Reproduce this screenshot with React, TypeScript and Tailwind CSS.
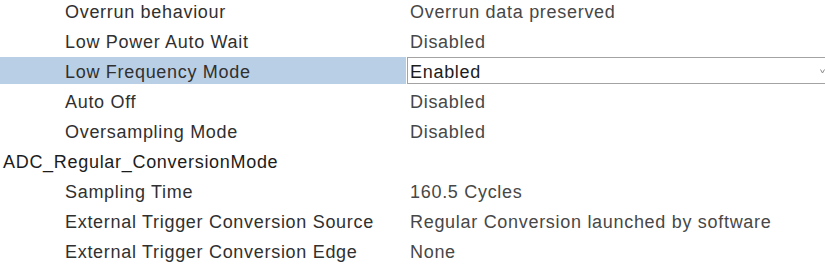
import React from "react";

type Row = { label: string; value?: string; category?: boolean; selected?: boolean };

const rows: Row[] = [
  { label: "Overrun behaviour", value: "Overrun data preserved" },
  { label: "Low Power Auto Wait", value: "Disabled" },
  { label: "Low Frequency Mode", value: "Enabled", selected: true },
  { label: "Auto Off", value: "Disabled" },
  { label: "Oversampling Mode", value: "Disabled" },
  { label: "ADC_Regular_ConversionMode", category: true },
  { label: "Sampling Time", value: "160.5 Cycles" },
  { label: "External Trigger Conversion Source", value: "Regular Conversion launched by software" },
  { label: "External Trigger Conversion Edge", value: "None" },
];

export default function App() {
  return (
    <div className="w-[825px] h-[274px] overflow-hidden bg-white font-['Liberation_Sans',Arial,sans-serif] text-[18px] leading-[20px] tracking-[0.7px] text-[#303030]">
      {/* property grid, first row scrolled slightly out of view */}
      <div className="-mt-[4px] flex flex-col">
        {rows.map((r) =>
          r.category ? (
            <div key={r.label} className="h-[30px] flex items-start">
              <div className="mt-[1px] h-[27px] pt-[5px] pl-[3px] text-[#1c1c1c] whitespace-nowrap">{r.label}</div>
            </div>
          ) : (
            <div key={r.label} className="h-[30px] flex items-start">
              <div
                className={`w-[406px] shrink-0 mt-[1px] h-[27px] pt-[5px] pl-[65px] whitespace-nowrap ${r.selected ? "bg-[#b9cfe6]" : ""}`}
              >
                {r.label}
              </div>
              {r.selected ? (
                <div className="ml-[1px] w-[440px] shrink-0 mt-[1px] h-[27px] border border-[#a3a3a3] flex items-start pt-[4px] pl-[2px] text-[#1c1c1c]">
                  <span className="w-[410px]">{r.value}</span>
                  <svg width="5" height="5" viewBox="0 0 5 5" className="mt-[7px]">
                    <path d="M0.5 0.5 L2.5 4 L4.5 0.5" stroke="#8a8a8a" strokeWidth="1" fill="none" />
                  </svg>
                </div>
              ) : (
                <div className="mt-[1px] h-[27px] pt-[5px] pl-[4px] text-[#474747] whitespace-nowrap">{r.value}</div>
              )}
            </div>
          )
        )}
      </div>
    </div>
  );
}
